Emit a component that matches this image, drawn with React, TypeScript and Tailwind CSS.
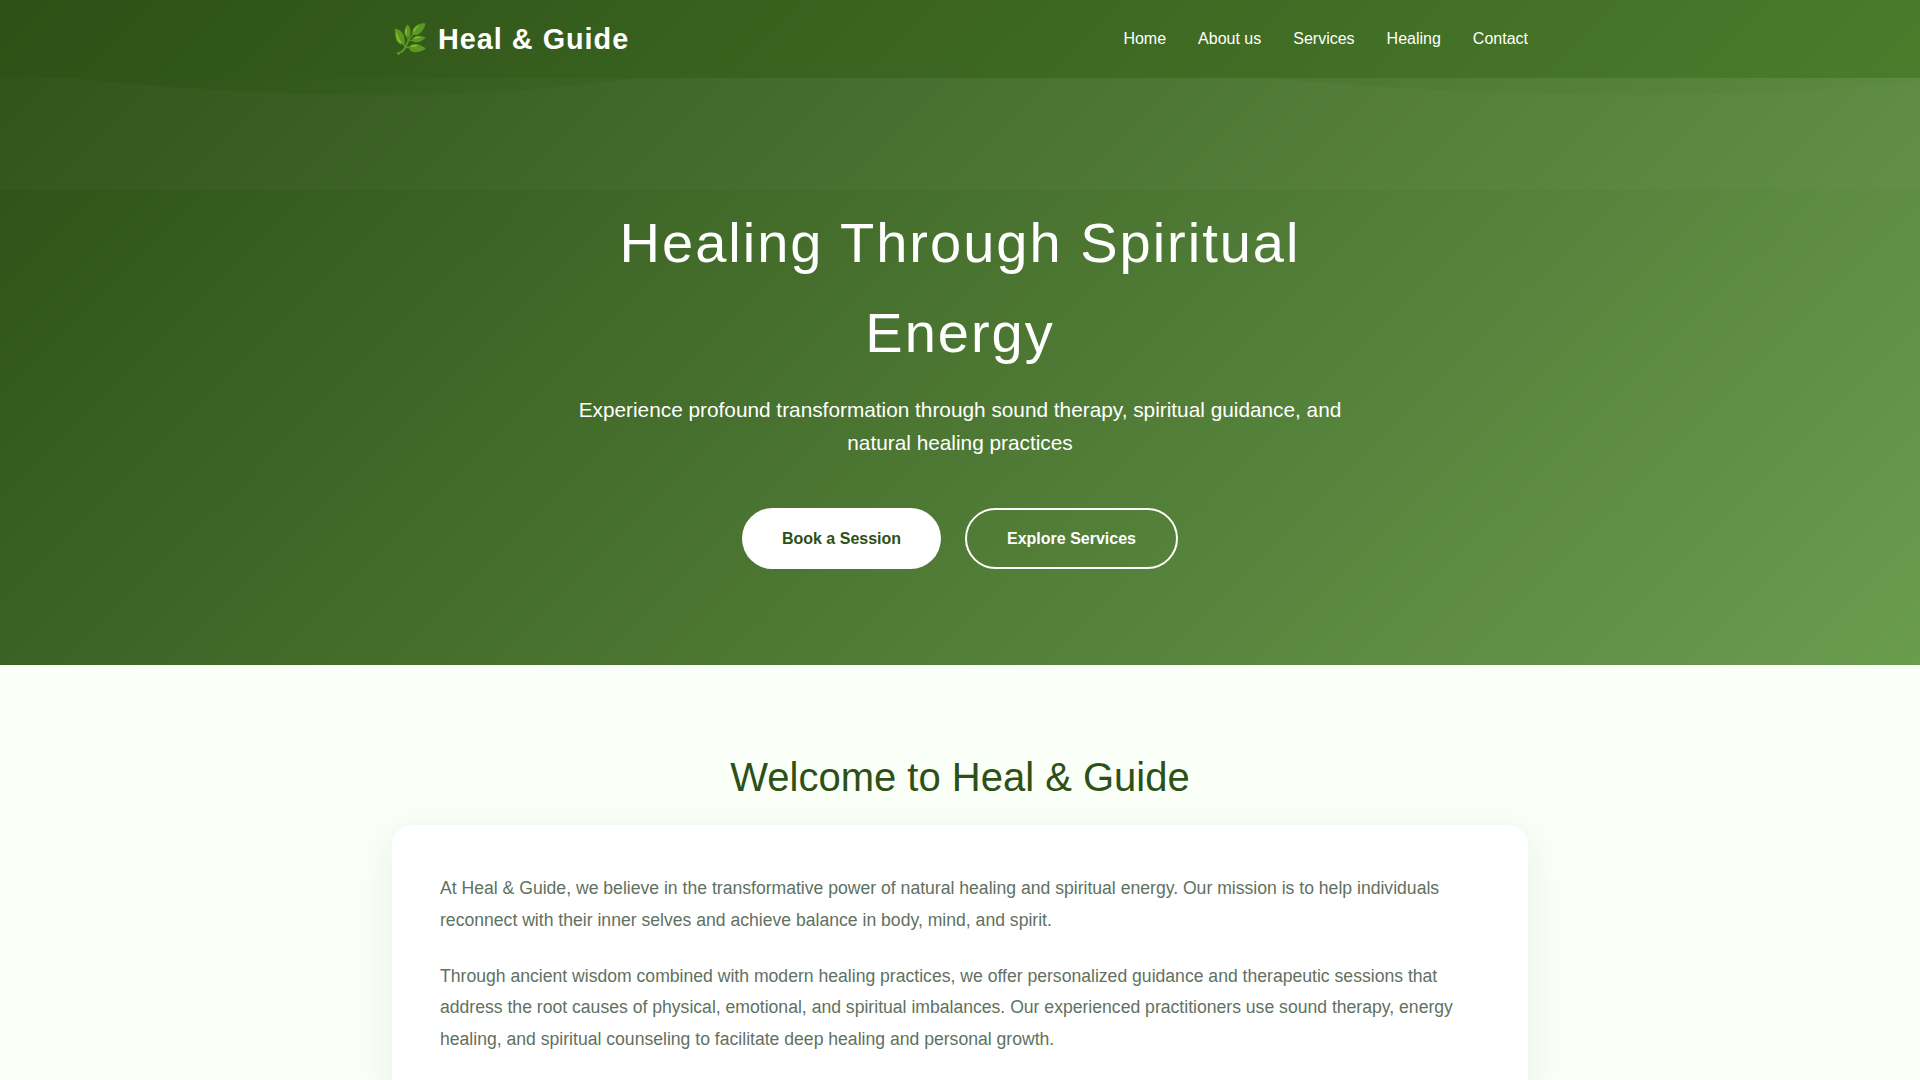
const nav = ["Home", "About us", "Services", "Healing", "Contact"];

export default function App() {
  return (
    <div className="min-h-screen bg-[#fafff7] font-['Liberation_Sans',Arial,sans-serif] overflow-x-hidden">
      <header className="relative z-10 bg-[linear-gradient(135deg,#2d5016_0%,#4a7c2c_100%)]">
        <div className="mx-auto flex h-[78px] max-w-[1200px] items-center justify-between px-8">
          <div className="flex items-center gap-[9px] pt-[2px] text-[28.8px] font-bold tracking-[1px] text-white">
            <span>🌿</span>
            <span>Heal &amp; Guide</span>
          </div>
          <nav className="flex items-center gap-8">
            {nav.map((n) => (
              <a key={n} className="text-base text-white">{n}</a>
            ))}
          </nav>
        </div>
      </header>
      <section className="relative h-[587px] overflow-hidden bg-[linear-gradient(135deg,#2d5016_0%,#6a9c4e_100%)]">
        <svg className="absolute left-0 top-0 h-[112px] w-full" viewBox="0 0 1920 112" preserveAspectRatio="none">
          <path d="M73,0 C190,12 290,17 400,17 C490,17 570,8 640,0 H1266 C1400,12 1540,17 1664,17 C1760,17 1850,10 1920,3 V112 H0 V0 Z" fill="rgba(255,255,255,0.025)" />
        </svg>
        <div className="relative mx-auto flex max-w-[800px] flex-col items-center pt-[120px] text-center text-white">
          <h1 className="text-[56px] font-normal leading-[90px] tracking-[2px]">Healing Through Spiritual Energy</h1>
          <p className="mt-[15px] text-[20.8px] leading-[33px]">Experience profound transformation through sound therapy, spiritual guidance, and natural healing practices</p>
          <div className="mt-[49px] flex gap-6">
            <a className="flex h-[61px] w-[199px] items-center justify-center rounded-[50px] bg-white text-base font-bold text-[#2d5016]">Book a Session</a>
            <a className="flex h-[61px] w-[213px] items-center justify-center rounded-[50px] border-2 border-white text-base font-bold text-white">Explore Services</a>
          </div>
        </div>
      </section>
      <main className="mx-auto max-w-[1200px] px-8 pt-[87px]">
        <h2 className="text-center text-[40px] font-normal leading-[50px] text-[#2d5016]">Welcome to Heal &amp; Guide</h2>
        <div className="mt-[23px] rounded-[20px] bg-white p-12 shadow-[0_10px_40px_rgba(45,80,22,0.08)]">
          <p className="text-[17.6px] leading-[31.68px] text-[#5f7161]">At Heal &amp; Guide, we believe in the transformative power of natural healing and spiritual energy. Our mission is to help individuals reconnect with their inner selves and achieve balance in body, mind, and spirit.</p>
          <p className="mt-[24.2px] text-[17.6px] leading-[31.68px] text-[#5f7161]">Through ancient wisdom combined with modern healing practices, we offer personalized guidance and therapeutic sessions that address the root causes of physical, emotional, and spiritual imbalances. Our experienced practitioners use sound therapy, energy healing, and spiritual counseling to facilitate deep healing and personal growth.</p>
        </div>
      </main>
    </div>
  );
}
